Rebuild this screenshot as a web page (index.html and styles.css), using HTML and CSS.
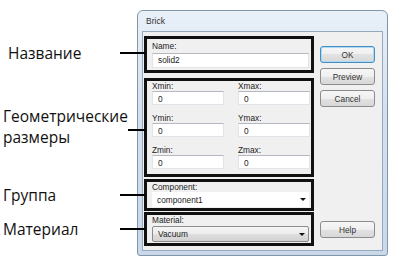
FILE: index.html
```html
<!DOCTYPE html>
<html lang="ru">
<head>
  <meta charset="UTF-8">
  <meta name="viewport" content="width=device-width, initial-scale=1.0">
  <link rel="stylesheet" href="styles.css">
</head>
<body>

<div class="page">
  <!-- annotations on the left -->
  <div class="notes">
    <div class="note note-name"><span class="note-text">Название</span><span class="note-line"></span></div>
    <div class="note note-geom"><span class="note-text">Геометрические<br>размеры</span><span class="note-line"></span></div>
    <div class="note note-group"><span class="note-text">Группа</span><span class="note-line"></span></div>
    <div class="note note-mat"><span class="note-text">Материал</span><span class="note-line"></span></div>
  </div>

  <!-- the dialog window -->
  <div class="window">
    <div class="title">Brick</div>
    <div class="client">
      <div class="fields">
        <div class="box box-name">
          <div class="label">Name:</div>
          <div class="field">solid2</div>
        </div>

        <div class="box box-geom">
          <div class="cell"><div class="label">Xmin:</div><div class="field">0</div></div>
          <div class="cell"><div class="label">Xmax:</div><div class="field">0</div></div>
          <div class="cell"><div class="label">Ymin:</div><div class="field">0</div></div>
          <div class="cell"><div class="label">Ymax:</div><div class="field">0</div></div>
          <div class="cell"><div class="label">Zmin:</div><div class="field">0</div></div>
          <div class="cell"><div class="label">Zmax:</div><div class="field">0</div></div>
        </div>

        <div class="box box-comp">
          <div class="label">Component:</div>
          <div class="select">component1<span class="arrow"></span></div>
        </div>

        <div class="box box-mat">
          <div class="label">Material:</div>
          <div class="select select-btn">Vacuum<span class="arrow"></span></div>
        </div>
      </div>

      <div class="buttons">
        <button class="btn btn-default">OK</button>
        <button class="btn">Preview</button>
        <button class="btn">Cancel</button>
        <button class="btn btn-help">Help</button>
      </div>
    </div>
  </div>
</div>

</body>
</html>
```

FILE: styles.css
```css
body {
  margin: 0;
  background: #fff;
  color: #111;
}

.page {
  display: flex;
  align-items: flex-start;
}

/* ---- annotations ---- */

.notes {
  width: 137px;
  flex-shrink: 0;
  display: flex;
  flex-direction: column;
  padding-left: 3px;
  box-sizing: border-box;
  font-family: "Open Sans", sans-serif;
  font-size: 15.5px;
}

.note {
  display: flex;
  align-items: center;
  height: 20px;
  line-height: 20px;
}

.note-line {
  position: relative; /* keep it above the window frame */
  z-index: 1;
  width: 25px;
  height: 2px;
  background: #000;
  margin-left: auto;
  margin-right: -8px;
}

.note-name {
  margin-top: 43px;
}

.note-name .note-text {
  margin-left: 5px;
}

.note-geom {
  margin-top: 43px;
  height: 42px;
  line-height: 21px;
  align-items: flex-start;
}

.note-geom .note-line {
  margin-top: 23px;
}

.note-group {
  margin-top: 37px;
}

.note-mat {
  margin-top: 14px;
}

/* ---- dialog window ---- */

.window {
  width: 251px;
  margin-top: 10px;
  box-sizing: border-box;
  border: 1px solid #8395aa;
  border-radius: 6px 6px 3px 3px;
  background: linear-gradient(#e9f0f8, #d3e0ee 40%, #c9d9ea);
  padding: 0 4px 4px 4px;
  font-family: "Liberation Sans", Arial, sans-serif;
  font-size: 8.3px;
  color: #222;
}

.title {
  height: 20px;
  line-height: 20px;
  padding-left: 4px;
  font-size: 8.5px;
  color: #333;
}

.client {
  display: flex;
  background: #f0f0f0;
  border: 1px solid #97a9bf;
  padding: 4px 0 4px 1px;
}

.fields {
  width: 170px;
  display: flex;
  flex-direction: column;
}

.box {
  border: 3px solid #111;
  padding: 0 2px 0 5px;
}

.label {
  height: 10px;
  line-height: 10px;
}

.field {
  height: 14px;
  line-height: 14px;
  box-sizing: border-box;
  background: #fff;
  border: 1px solid #e2e4ea;
  border-top-color: #b5b8c0;
  padding-left: 5px;
}

.box-name {
  height: 37px;
  box-sizing: border-box;
  padding-top: 2px;
}

.box-name .label {
  height: 11px;
  line-height: 11px;
  margin-bottom: 1px;
}

.box-name .field {
  height: 15px;
  line-height: 13px;
}

.box-geom {
  margin-top: 5px;
  display: grid;
  grid-template-columns: 72px 72px;
  column-gap: 14px;
  row-gap: 8px;
  padding-bottom: 5px;
}

.box-comp {
  margin-top: 2px;
  padding-bottom: 1px;
}

.box-mat {
  margin-top: 1px;
  padding-bottom: 1px;
}

.box-mat .label {
  height: 11px;
  line-height: 11px;
}

.select {
  display: flex;
  align-items: center;
  height: 15px;
  box-sizing: border-box;
  background: #fff;
  padding: 0 3px 0 5px;
}

.select-btn {
  height: 16px;
  border: 1px solid #8c8c8c;
  border-radius: 2px;
  background: linear-gradient(#f4f4f4, #ececec 50%, #dedede 50%, #d3d3d3);
}

.arrow {
  margin-left: auto;
  width: 0;
  height: 0;
  border-left: 3px solid transparent;
  border-right: 3px solid transparent;
  border-top: 3px solid #111;
}

/* ---- buttons ---- */

.buttons {
  width: 55px;
  margin-left: 6px;
  display: flex;
  flex-direction: column;
  gap: 5px;
  padding-top: 10px;
  padding-bottom: 8px;
}

.btn {
  height: 17px;
  padding: 0;
  font-family: "Liberation Sans", Arial, sans-serif;
  font-size: 8.3px;
  color: #333;
  border: 1px solid #8c8c8c;
  border-radius: 3px;
  background: linear-gradient(#f6f6f6, #efefef 50%, #e2e2e2 50%, #d8d8d8);
}

.btn-default {
  border-color: #4a8bc0;
  box-shadow: inset 0 0 0 1px #a6dcf6;
}

.btn-help {
  margin-top: auto;
}
```
